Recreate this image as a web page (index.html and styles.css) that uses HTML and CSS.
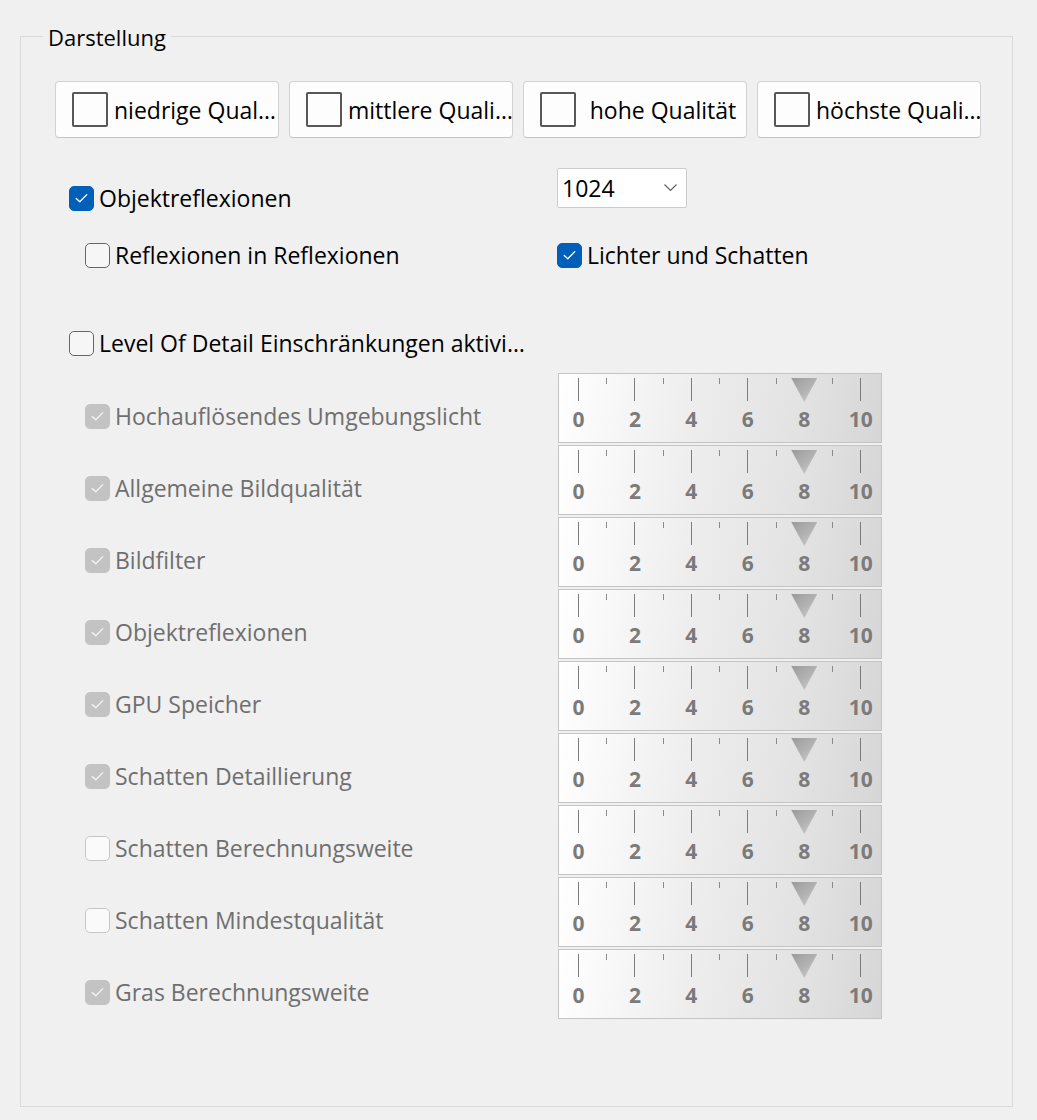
FILE: index.html
```html
<!DOCTYPE html>
<html lang="de">
<head>
<meta charset="utf-8">
<title>Darstellung</title>
<link rel="stylesheet" href="styles.css">
</head>
<body>
<div class="group">
  <div class="legend">Darstellung</div>

  <div class="presets">
    <div class="preset"><span class="sq"></span><span class="ptxt">niedrige Qual…</span></div>
    <div class="preset"><span class="sq"></span><span class="ptxt">mittlere Quali…</span></div>
    <div class="preset"><span class="sq"></span><span class="ptxt">hohe Qualität</span></div>
    <div class="preset"><span class="sq"></span><span class="ptxt">höchste Quali…</span></div>
  </div>

  <div class="opts">
    <div class="row r1">
      <div class="col-left">
        <div class="cb"><span class="box on"><svg viewBox="0 0 24 24"><polyline points="6.5,12.5 10.2,16 17.5,8.5"/></svg></span><span class="lbl">Objektreflexionen</span></div>
      </div>
      <div class="select"><span class="sel-val">1024</span><svg class="chev" viewBox="0 0 13 7"><path d="M0.5 0.5 L6.5 6.5 L12.5 0.5"/></svg></div>
    </div>
    <div class="row r2">
      <div class="col-left sub">
        <div class="cb"><span class="box"></span><span class="lbl">Reflexionen in Reflexionen</span></div>
      </div>
      <div class="cb"><span class="box on"><svg viewBox="0 0 24 24"><polyline points="6.5,12.5 10.2,16 17.5,8.5"/></svg></span><span class="lbl">Lichter und Schatten</span></div>
    </div>
    <div class="row r3">
      <div class="cb"><span class="box"></span><span class="lbl">Level Of Detail Einschränkungen aktivi…</span></div>
    </div>
  </div>

  <div class="lod">
    <div class="cb dis"><span class="box dchk"><svg viewBox="0 0 24 24"><polyline points="6.5,12.5 10.2,16 17.5,8.5"/></svg></span><span class="lbl">Hochauflösendes Umgebungslicht</span></div>
    <div class="slider">
      <div class="ticks"><i class="maj"></i><i class="min"></i><i class="maj"></i><i class="min"></i><i class="maj"></i><i class="min"></i><i class="maj"></i><i class="min"></i><i class="thumb"><b></b></i><i class="min"></i><i class="maj"></i></div>
      <div class="nums"><span>0</span><span></span><span>2</span><span></span><span>4</span><span></span><span>6</span><span></span><span>8</span><span></span><span>10</span></div>
    </div>

    <div class="cb dis"><span class="box dchk"><svg viewBox="0 0 24 24"><polyline points="6.5,12.5 10.2,16 17.5,8.5"/></svg></span><span class="lbl">Allgemeine Bildqualität</span></div>
    <div class="slider">
      <div class="ticks"><i class="maj"></i><i class="min"></i><i class="maj"></i><i class="min"></i><i class="maj"></i><i class="min"></i><i class="maj"></i><i class="min"></i><i class="thumb"><b></b></i><i class="min"></i><i class="maj"></i></div>
      <div class="nums"><span>0</span><span></span><span>2</span><span></span><span>4</span><span></span><span>6</span><span></span><span>8</span><span></span><span>10</span></div>
    </div>

    <div class="cb dis"><span class="box dchk"><svg viewBox="0 0 24 24"><polyline points="6.5,12.5 10.2,16 17.5,8.5"/></svg></span><span class="lbl">Bildfilter</span></div>
    <div class="slider">
      <div class="ticks"><i class="maj"></i><i class="min"></i><i class="maj"></i><i class="min"></i><i class="maj"></i><i class="min"></i><i class="maj"></i><i class="min"></i><i class="thumb"><b></b></i><i class="min"></i><i class="maj"></i></div>
      <div class="nums"><span>0</span><span></span><span>2</span><span></span><span>4</span><span></span><span>6</span><span></span><span>8</span><span></span><span>10</span></div>
    </div>

    <div class="cb dis"><span class="box dchk"><svg viewBox="0 0 24 24"><polyline points="6.5,12.5 10.2,16 17.5,8.5"/></svg></span><span class="lbl">Objektreflexionen</span></div>
    <div class="slider">
      <div class="ticks"><i class="maj"></i><i class="min"></i><i class="maj"></i><i class="min"></i><i class="maj"></i><i class="min"></i><i class="maj"></i><i class="min"></i><i class="thumb"><b></b></i><i class="min"></i><i class="maj"></i></div>
      <div class="nums"><span>0</span><span></span><span>2</span><span></span><span>4</span><span></span><span>6</span><span></span><span>8</span><span></span><span>10</span></div>
    </div>

    <div class="cb dis"><span class="box dchk"><svg viewBox="0 0 24 24"><polyline points="6.5,12.5 10.2,16 17.5,8.5"/></svg></span><span class="lbl">GPU Speicher</span></div>
    <div class="slider">
      <div class="ticks"><i class="maj"></i><i class="min"></i><i class="maj"></i><i class="min"></i><i class="maj"></i><i class="min"></i><i class="maj"></i><i class="min"></i><i class="thumb"><b></b></i><i class="min"></i><i class="maj"></i></div>
      <div class="nums"><span>0</span><span></span><span>2</span><span></span><span>4</span><span></span><span>6</span><span></span><span>8</span><span></span><span>10</span></div>
    </div>

    <div class="cb dis"><span class="box dchk"><svg viewBox="0 0 24 24"><polyline points="6.5,12.5 10.2,16 17.5,8.5"/></svg></span><span class="lbl">Schatten Detaillierung</span></div>
    <div class="slider">
      <div class="ticks"><i class="maj"></i><i class="min"></i><i class="maj"></i><i class="min"></i><i class="maj"></i><i class="min"></i><i class="maj"></i><i class="min"></i><i class="thumb"><b></b></i><i class="min"></i><i class="maj"></i></div>
      <div class="nums"><span>0</span><span></span><span>2</span><span></span><span>4</span><span></span><span>6</span><span></span><span>8</span><span></span><span>10</span></div>
    </div>

    <div class="cb dis"><span class="box dun"></span><span class="lbl">Schatten Berechnungsweite</span></div>
    <div class="slider">
      <div class="ticks"><i class="maj"></i><i class="min"></i><i class="maj"></i><i class="min"></i><i class="maj"></i><i class="min"></i><i class="maj"></i><i class="min"></i><i class="thumb"><b></b></i><i class="min"></i><i class="maj"></i></div>
      <div class="nums"><span>0</span><span></span><span>2</span><span></span><span>4</span><span></span><span>6</span><span></span><span>8</span><span></span><span>10</span></div>
    </div>

    <div class="cb dis"><span class="box dun"></span><span class="lbl">Schatten Mindestqualität</span></div>
    <div class="slider">
      <div class="ticks"><i class="maj"></i><i class="min"></i><i class="maj"></i><i class="min"></i><i class="maj"></i><i class="min"></i><i class="maj"></i><i class="min"></i><i class="thumb"><b></b></i><i class="min"></i><i class="maj"></i></div>
      <div class="nums"><span>0</span><span></span><span>2</span><span></span><span>4</span><span></span><span>6</span><span></span><span>8</span><span></span><span>10</span></div>
    </div>

    <div class="cb dis"><span class="box dchk"><svg viewBox="0 0 24 24"><polyline points="6.5,12.5 10.2,16 17.5,8.5"/></svg></span><span class="lbl">Gras Berechnungsweite</span></div>
    <div class="slider">
      <div class="ticks"><i class="maj"></i><i class="min"></i><i class="maj"></i><i class="min"></i><i class="maj"></i><i class="min"></i><i class="maj"></i><i class="min"></i><i class="thumb"><b></b></i><i class="min"></i><i class="maj"></i></div>
      <div class="nums"><span>0</span><span></span><span>2</span><span></span><span>4</span><span></span><span>6</span><span></span><span>8</span><span></span><span>10</span></div>
    </div>
  </div>
</div>
</body>
</html>
```

FILE: styles.css
```css
html, body {
  margin: 0;
  padding: 0;
  background: #f0f0f0;
}
body {
  font-family: "Open Sans", "Noto Sans", sans-serif;
  font-size: 23px;
  color: #000;
  width: 1037px;
  height: 1120px;
  overflow: hidden;
}

.group {
  position: relative;
  box-sizing: border-box;
  margin: 36px 0 0 20px;
  width: 993px;
  height: 1071px;
  border: 1px solid #dadada;
}
.legend {
  position: absolute;
  top: -15px;
  left: 22px;
  padding: 0 5px;
  background: #f0f0f0;
  font-size: 22px;
  line-height: 30px;
}

/* preset buttons */
.presets {
  display: flex;
  gap: 10px;
  margin-top: 44px;
  padding-left: 34px;
}
.preset {
  box-sizing: border-box;
  width: 224px;
  height: 57px;
  display: flex;
  align-items: center;
  padding-left: 16px;
  background: #fdfdfd;
  border: 1px solid #d2d2d2;
  border-bottom-color: #c4c4c4;
  border-radius: 4px;
}
.sq {
  box-sizing: border-box;
  flex: none;
  width: 36px;
  height: 35px;
  border: 2px solid #575757;
  border-radius: 2px;
}
.ptxt {
  flex: 1;
  text-align: center;
  white-space: nowrap;
  overflow: hidden;
  line-height: 30px;
  padding: 0 2px 0 6px;
}

/* option rows */
.opts {
  padding-left: 48px;
}
.row {
  display: flex;
  align-items: flex-start;
}
.r1 { margin-top: 30px; }
.r2 { margin-top: 27px; }
.r3 { margin-top: 58px; }
.col-left {
  width: 488px;
  flex: none;
}
.r1 .col-left { padding-top: 15px; }
.col-left.sub { box-sizing: border-box; padding-left: 16px; }

.cb {
  display: flex;
  align-items: center;
  gap: 5px;
  line-height: 30px;
  white-space: nowrap;
}
.box {
  box-sizing: border-box;
  flex: none;
  width: 25px;
  height: 25px;
  border: 1px solid #666;
  border-radius: 5px;
  background: #f6f6f6;
  display: flex;
  align-items: center;
  justify-content: center;
}
.box svg {
  width: 24px;
  height: 24px;
}
.box polyline {
  fill: none;
  stroke: #fff;
  stroke-width: 1.4;
  stroke-linecap: round;
  stroke-linejoin: round;
}
.box.on {
  background: #005fb8;
  border-color: #005fb8;
}
.box.dchk {
  background: #c3c3c3;
  border-color: #c3c3c3;
}
.box.dchk polyline { stroke: #f4f4f4; }
.box.dun {
  background: #fafafa;
  border-color: #c6c6c6;
}
.cb.dis .lbl { color: #6f6f6f; }

.select {
  box-sizing: border-box;
  width: 130px;
  height: 40px;
  display: flex;
  align-items: center;
  justify-content: space-between;
  padding: 0 9px 0 4px;
  background: #fff;
  border: 1px solid #cccccc;
  border-radius: 2px;
  line-height: 30px;
}
.chev {
  width: 13px;
  height: 7px;
  margin-bottom: 2px;
}
.chev path {
  fill: none;
  stroke: #606060;
  stroke-width: 1.1;
}

/* LOD sliders */
.lod {
  display: grid;
  grid-template-columns: 473px 324px;
  grid-auto-rows: 70px;
  row-gap: 2px;
  margin-top: 15px;
  padding-left: 64px;
}
.lod .cb {
  align-self: start;
  padding-top: 28px;
}
.slider {
  box-sizing: border-box;
  border: 1px solid #c4c4c4;
  background: linear-gradient(100deg, #ffffff 0%, #ececec 45%, #e2e2e2 75%, #d6d6d6 100%);
}
.ticks, .nums {
  display: flex;
  padding-left: 5.4px;
}
.ticks {
  margin-top: 4px;
  height: 24px;
}
.ticks i {
  width: 28.22px;
  flex: none;
  display: flex;
  justify-content: center;
}
.ticks i.maj::before,
.ticks i.min::before {
  content: "";
  width: 1px;
  background: #7c7c7c;
}
.ticks i.maj::before { height: 23px; }
.ticks i.min::before { height: 6px; background: #8a8a8a; }
.ticks i.thumb b {
  width: 26px;
  height: 24px;
  background: linear-gradient(140deg, #9a9a9a 0%, #b4b4b4 55%, #d0d0d0 100%);
  clip-path: polygon(0 0, 100% 0, 50% 100%);
}
.nums {
  margin-top: 7px;
  font-weight: 700;
  font-size: 21px;
  line-height: 21px;
  color: #7b7b7b;
}
.nums span {
  width: 28.22px;
  flex: none;
  display: flex;
  justify-content: center;
  white-space: nowrap;
}
```
